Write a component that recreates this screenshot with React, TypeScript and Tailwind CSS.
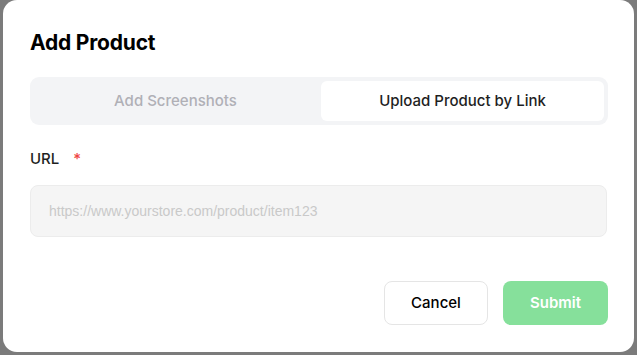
import * as React from 'react'

export default function App() {
  const [tab, setTab] = React.useState<'shots' | 'link'>('link')

  return (
    <div className="h-[355px] w-[637px] bg-[#7b7b7b] pl-[3px] pr-[3px] pb-[3px] font-['Inter',sans-serif]">
      <div className="flex h-[352px] flex-col rounded-[14px] bg-white pl-[27px] pr-[26px] pt-[29px]">
        <h2 className="text-[21px] font-bold leading-[28px] tracking-[-0.2px] text-black">Add Product</h2>

        <div className="mt-[20px] flex h-[48px] w-[578px] gap-1 rounded-[9px] bg-[#f3f4f6] p-1">
          <button
            onClick={() => setTab('shots')}
            className={
              tab === 'shots'
                ? 'flex-1 rounded-[6px] bg-white text-[15px] font-medium text-[#1f1f1f]'
                : 'flex-1 rounded-[6px] text-[15px] font-medium text-[#b0b0b6]'
            }
          >
            Add Screenshots
          </button>
          <button
            onClick={() => setTab('link')}
            className={
              tab === 'link'
                ? 'flex-1 rounded-[6px] bg-white text-[15px] font-medium text-[#1f1f1f]'
                : 'flex-1 rounded-[6px] text-[15px] font-medium text-[#b0b0b6]'
            }
          >
            Upload Product by Link
          </button>
        </div>

        <div className="mt-[24px] flex items-center text-[15px] font-medium leading-[20px] text-[#1f1f1f]">
          URL
          <span className="ml-[14px] text-[#ef4444]">*</span>
        </div>

        <input
          placeholder="https://www.yourstore.com/product/item123"
          className="mt-[16px] h-[52px] w-[577px] rounded-[8px] border border-[#ececec] bg-[#f5f5f5] px-[18px] font-['Liberation_Sans',Arial,sans-serif] text-[14px] text-[#333] outline-none placeholder:text-[#c9c9c9]"
        />

        <div className="mt-[44px] flex justify-end gap-[15px]">
          <button className="h-[44px] w-[104px] rounded-[8px] border border-[#e5e5e5] bg-white text-[15px] font-medium text-black">
            Cancel
          </button>
          <button className="h-[44px] w-[105px] rounded-[8px] bg-[#86e09b] text-[15px] font-semibold text-white">
            Submit
          </button>
        </div>
      </div>
    </div>
  )
}
